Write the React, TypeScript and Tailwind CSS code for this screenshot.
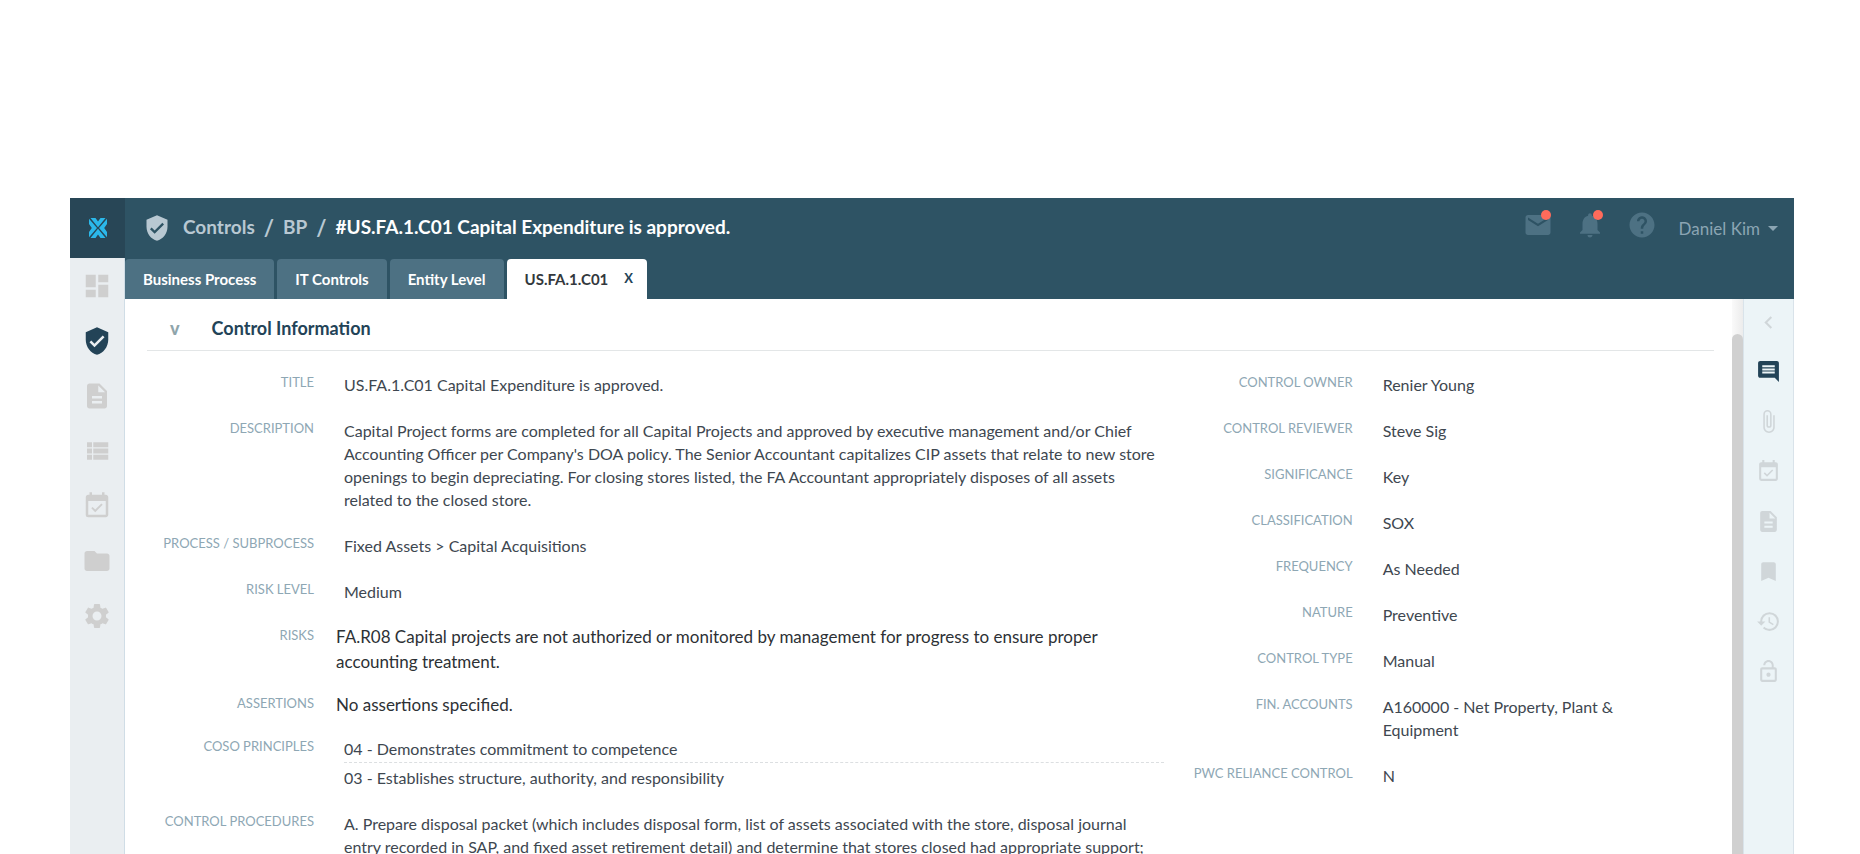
import { useState, type ReactNode } from "react";
import type { IconType } from "react-icons";
import {
  MdAttachFile,
  MdBookmark,
  MdChevronLeft,
  MdComment,
  MdDashboard,
  MdDescription,
  MdEmail,
  MdEventAvailable,
  MdFolder,
  MdHelp,
  MdHistory,
  MdLockOpen,
  MdNotifications,
  MdSettings,
  MdVerifiedUser,
} from "react-icons/md";

type Icon = IconType | typeof ListIcon;
type Field = { label: string; value: ReactNode; large?: boolean };

const NAV: { label: string; icon: Icon }[] = [
  { label: "Dashboard", icon: MdDashboard },
  { label: "Controls", icon: MdVerifiedUser },
  { label: "Documents", icon: MdDescription },
  { label: "Lists", icon: ListIcon },
  { label: "Calendar", icon: MdEventAvailable },
  { label: "Folders", icon: MdFolder },
  { label: "Settings", icon: MdSettings },
];

const TOOLS: { label: string; icon: Icon }[] = [
  { label: "Comments", icon: MdComment },
  { label: "Attachments", icon: MdAttachFile },
  { label: "Schedule", icon: MdEventAvailable },
  { label: "Documents", icon: MdDescription },
  { label: "Bookmarks", icon: MdBookmark },
  { label: "History", icon: MdHistory },
  { label: "Lock", icon: MdLockOpen },
];

const TABS = ["Business Process", "IT Controls", "Entity Level"];

const DETAILS: Field[] = [
  { label: "Title", value: "US.FA.1.C01 Capital Expenditure is approved." },
  {
    label: "Description",
    value:
      "Capital Project forms are completed for all Capital Projects and approved by executive management and/or Chief Accounting Officer per Company's DOA policy. The Senior Accountant capitalizes CIP assets that relate to new store openings to begin depreciating. For closing stores listed, the FA Accountant appropriately disposes of all assets related to the closed store.",
  },
  { label: "Process / Subprocess", value: "Fixed Assets > Capital Acquisitions" },
  { label: "Risk Level", value: "Medium" },
  {
    label: "Risks",
    value:
      "FA.R08 Capital projects are not authorized or monitored by management for progress to ensure proper accounting treatment.",
    large: true,
  },
  { label: "Assertions", value: "No assertions specified.", large: true },
  {
    label: "COSO Principles",
    value: (
      <ul>
        <li className="border-b border-dashed border-[#dcdfe1] pb-0.5">
          04 - Demonstrates commitment to competence
        </li>
        <li className="pt-[3px]">03 - Establishes structure, authority, and responsibility</li>
      </ul>
    ),
  },
  {
    label: "Control Procedures",
    value:
      "A. Prepare disposal packet (which includes disposal form, list of assets associated with the store, disposal journal entry recorded in SAP, and fixed asset retirement detail) and determine that stores closed had appropriate support;",
  },
];

const ATTRIBUTES: Field[] = [
  { label: "Control Owner", value: "Renier Young" },
  { label: "Control Reviewer", value: "Steve Sig" },
  { label: "Significance", value: "Key" },
  { label: "Classification", value: "SOX" },
  { label: "Frequency", value: "As Needed" },
  { label: "Nature", value: "Preventive" },
  { label: "Control Type", value: "Manual" },
  { label: "Fin. Accounts", value: "A160000 - Net Property, Plant & Equipment" },
  { label: "PwC Reliance Control", value: "N" },
];

function Logo() {
  return (
    <svg viewBox="0 0 18 20" className="h-5 w-[18px]" fill="#2bb8ea" aria-hidden="true">
      <path d="M1.5 0h5L9 3.500 11.500 0h5L9 9.200z" />
      <path d="M1.500 20h5L9 16.500l2.500 3.500h5L9 10.800z" />
      <path d="M0 .8 8 10 0 19.200V14l2.800-4L0 6z" />
      <path d="M18 .8 10 10l8 9.200V14l-2.800-4L18 6z" />
    </svg>
  );
}

function ListIcon({ className }: { className?: string }) {
  return (
    <svg viewBox="0 0 24 24" className={className} fill="currentColor" aria-hidden="true">
      <path d="M4 14h4v-4H4v4zm0 5h4v-4H4v4zM4 9h4V5H4v4zm5 5h12v-4H9v4zm0 5h12v-4H9v4zM9 5v4h12V5H9z" />
    </svg>
  );
}

/** A label / value row; large rows use the bigger, darker type. */
function FieldRow({ field, labelClass }: { field: Field; labelClass: string }) {
  return (
    <div className={`flex ${field.large ? "gap-[22px] pt-2 pb-2.5" : "gap-[30px] pt-2.5 pb-[13px]"}`}>
      <dt
        className={`shrink-0 text-right text-[13px] uppercase text-[#8ea7b4] ${labelClass} ${
          field.large ? "leading-[23px]" : "leading-[19px]"
        }`}
      >
        {field.label}
      </dt>
      <dd
        className={`min-w-0 flex-1 pr-7 ${
          field.large ? "text-[17px] leading-[25px] text-[#2d3135]" : "text-base leading-[23px] text-[#3e4750]"
        }`}
      >
        {field.value}
      </dd>
    </div>
  );
}

function Badged({ label, icon: Icon }: { label: string; icon: IconType }) {
  return (
    <button type="button" aria-label={label} className="relative">
      <Icon className="size-[30px]" />
      <span className="absolute top-0 right-0.5 size-2.5 rounded-full bg-[#ff6b5b]" />
    </button>
  );
}

export default function App() {
  const [section, setSection] = useState("Controls");
  const [tool, setTool] = useState("Comments");
  const [open, setOpen] = useState(true);

  return (
    <div className="h-screen overflow-hidden bg-white pt-[198px] pr-[66px] pl-[70px] font-['Lato',sans-serif]">
      <div className="flex h-full">
        <aside className="flex w-[55px] shrink-0 flex-col bg-[#eaeef1]">
          <a href="#" aria-label="Home" className="flex h-[60px] shrink-0 items-center justify-center bg-[#284656]">
            <Logo />
          </a>
          <nav className="flex flex-1 flex-col border-r border-[#d0dde6]">
            {NAV.map(({ label, icon: Icon }) => (
              <button
                key={label}
                type="button"
                aria-label={label}
                onClick={() => setSection(label)}
                className={`flex h-[55px] shrink-0 items-center justify-center ${
                  section === label ? "text-[#234357]" : "text-[#cfcfcf]"
                }`}
              >
                <Icon className="size-[30px]" />
              </button>
            ))}
          </nav>
        </aside>

        <div className="flex min-w-0 flex-1 flex-col">
          <header className="shrink-0 bg-[#2e5364]">
            <div className="flex h-[61px] items-center justify-between pr-4 pl-[18px]">
              <div className="flex items-center gap-3 pb-0.5 text-[19px] font-bold text-[#b8c8d2]">
                <MdVerifiedUser className="size-7" />
                <nav className="flex items-center gap-[9px]">
                  <a href="#controls">Controls</a>
                  <span className="text-[22px] leading-6">/</span>
                  <a href="#bp">BP</a>
                  <span className="text-[22px] leading-6">/</span>
                  <h1 className="text-white">#US.FA.1.C01 Capital Expenditure is approved.</h1>
                </nav>
              </div>
              <div className="flex items-center gap-[22px] text-[#4d7183]">
                <div className="flex items-center gap-[22px] pb-2">
                  <Badged label="Messages" icon={MdEmail} />
                  <Badged label="Notifications" icon={MdNotifications} />
                  <button type="button" aria-label="Help">
                    <MdHelp className="size-[30px]" />
                  </button>
                </div>
                <button type="button" className="flex items-center gap-2 text-[17px] text-[#8ba5b3]">
                  Daniel Kim
                  <svg viewBox="0 0 10 5" className="h-[5px] w-2.5" fill="currentColor" aria-hidden="true">
                    <path d="M0 0h10L5 5z" />
                  </svg>
                </button>
              </div>
            </div>
            <div className="flex h-10 gap-[3px] text-[15px] font-bold">
              {TABS.map((tab) => (
                <button key={tab} type="button" className="rounded-t bg-[#4d7183] px-[18px] text-white">
                  {tab}
                </button>
              ))}
              <div className="flex items-center gap-4 rounded-t bg-white pr-3.5 pl-[18px] text-[#33383d]">
                <button type="button">US.FA.1.C01</button>
                <button type="button" aria-label="Close tab" className="pb-px text-[13px] text-[#234357]">
                  X
                </button>
              </div>
            </div>
          </header>

          <div className="flex min-h-0 flex-1">
            <main className="min-w-0 flex-1 overflow-hidden pr-[18px] pl-[22px]">
              <div className="flex h-[52px] items-center gap-8 border-b border-[#e3e6e7] pt-2 pb-0.5 pl-[23px]">
                <button
                  type="button"
                  aria-label="Toggle section"
                  onClick={() => setOpen((v) => !v)}
                  className="text-lg font-black text-[#8fa5ab]"
                >
                  v
                </button>
                <h2 className="text-lg font-bold text-[#234357]">Control Information</h2>
              </div>
              {open && (
                <div className="grid grid-cols-[minmax(0,2fr)_minmax(0,1fr)] pt-3">
                  <dl>
                    {DETAILS.map((f) => (
                      <FieldRow key={f.label} field={f} labelClass="w-[167px]" />
                    ))}
                  </dl>
                  <dl>
                    {ATTRIBUTES.map((f) => (
                      <FieldRow key={f.label} field={f} labelClass="w-[161px]" />
                    ))}
                  </dl>
                </div>
              )}
            </main>
            <div className="w-[11px] shrink-0 bg-linear-to-r from-[#fafafa] to-[#ececec] pt-[35px]">
              <div className="h-full rounded-t-md bg-[#d0d0d0]" />
            </div>
            <aside className="flex w-[51px] shrink-0 flex-col border-x border-[#d9e3ea] bg-[#ecf4f7] text-[#d0d6d9]">
              <button type="button" aria-label="Expand panel" className="flex h-[47px] shrink-0 items-center justify-center">
                <MdChevronLeft className="size-[25px]" />
              </button>
              {TOOLS.map(({ label, icon: Icon }) => (
                <button
                  key={label}
                  type="button"
                  aria-label={label}
                  onClick={() => setTool(label)}
                  className={`flex h-[50px] shrink-0 items-center justify-center ${
                    tool === label ? "text-[#234357]" : ""
                  }`}
                >
                  <Icon className="size-[25px]" />
                </button>
              ))}
            </aside>
          </div>
        </div>
      </div>
    </div>
  );
}
